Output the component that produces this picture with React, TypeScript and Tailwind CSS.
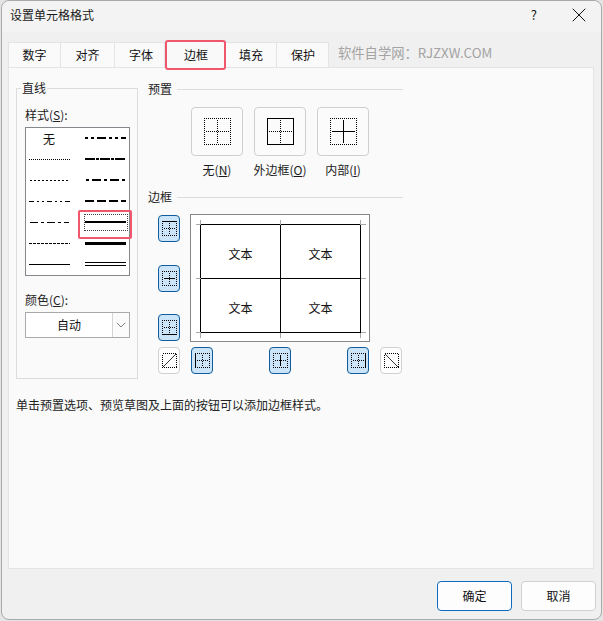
import { X, ChevronDown } from "lucide-react"

const font = "font-['Noto_Sans_CJK_SC','Liberation_Sans',sans-serif]"

const tabs = [
  { label: "数字", w: "w-[53px]" },
  { label: "对齐", w: "w-[54px]" },
  { label: "字体", w: "w-[50px] pl-[3px]" },
  { label: "边框", w: "w-[61px] pl-px", active: true },
  { label: "填充", w: "w-[51px]" },
  { label: "保护", w: "w-[52px] pl-px" },
]

// one dash pattern per cell, left column then right column
const leftLines = [
  { dash: "1 1", h: 1, w: 41 },
  { dash: "2 2", h: 1, w: 38 },
  { dash: "5 3 2 3 2 3", h: 1, w: 41 },
  { dash: "8 3 3 3", h: 1, w: 39 },
  { dash: "3 1", h: 1, w: 41 },
  { dash: "", h: 1, w: 41 },
]
const rightLines = [
  { dash: "3 3 3 3 9 3", h: 2, w: 41 },
  { dash: "10 1 3 1", h: 2, w: 41 },
  { dash: "3 3 9 3", h: 2, w: 39 },
  { dash: "9 3", h: 2, w: 41 },
  { dash: "", h: 2, w: 41 },
  { dash: "", h: 3, w: 41 },
]

function StyleLine({ dash, h, w }: { dash: string; h: number; w: number }) {
  const y = h % 2 === 1 ? 2.5 : 2
  return (
    <svg width={w} height="5" className="block" shapeRendering="crispEdges">
      <line x1="0" x2={w} y1={y} y2={y} stroke="#000" strokeWidth={h} strokeDasharray={dash || undefined} />
    </svg>
  )
}

function DoubleLine() {
  return (
    <svg width="41" height="5" className="block" shapeRendering="crispEdges">
      <path d="M0 .5H41M0 3.5H41" stroke="#000" strokeWidth="1" fill="none" />
    </svg>
  )
}

// border icon: dotted frame and cross, with some of the lines solid
function BorderIcon({ top, bottom, left, right, midH, midV, size = 27 }: { top?: boolean; bottom?: boolean; left?: boolean; right?: boolean; midH?: boolean; midV?: boolean; size?: number }) {
  const s = size - 0.5
  const m = size / 2
  const side = (on: boolean | undefined, d: string) => (
    <path d={d} fill="none" stroke="#000" strokeWidth="1" strokeDasharray={on ? undefined : "1 1"} />
  )
  return (
    <svg width={size} height={size} className="block" shapeRendering="crispEdges">
      {side(midH, `M2 ${m}H${size - 2}`)}
      {side(midV, `M${m} 2V${size - 2}`)}
      {side(top, `M0 .5H${size}`)}
      {side(bottom, `M0 ${s}H${size}`)}
      {side(left, `M.5 0V${size}`)}
      {side(right, `M${s} 0V${size}`)}
    </svg>
  )
}

function PresetButton({ label, hot, children }: { label: string; hot: string; children: React.ReactNode }) {
  return (
    <div className="flex w-[62px] flex-col items-center">
      <div className="flex h-[49px] w-[52px] items-center justify-center rounded-[4px] border border-[#cfcfcf] bg-[#fbfbfb]">
        {children}
      </div>
      <div className="mt-[4px] whitespace-nowrap text-[12px] leading-[20px] text-[#1a1a1a]">
        {label}(<span className="underline">{hot}</span>)
      </div>
    </div>
  )
}

function ToggleButton({ on, children }: { on?: boolean; children: React.ReactNode }) {
  return (
    <div
      className={
        on
          ? "flex h-[27px] w-[22px] items-center justify-center rounded-[4px] border border-[#0f5c9e] bg-[#cce4f7]"
          : "flex h-[27px] w-[22px] items-center justify-center rounded-[4px] border border-[#d0d0d0] bg-[#fdfdfd]"
      }
    >
      {children}
    </div>
  )
}

function Mini(props: { top?: boolean; bottom?: boolean; left?: boolean; right?: boolean; midH?: boolean; midV?: boolean }) {
  return <BorderIcon size={15} {...props} />
}

function Diagonal({ flip }: { flip?: boolean }) {
  return (
    <svg width="15" height="15" className="block">
      <rect x=".5" y=".5" width="14" height="14" fill="none" stroke="#000" strokeDasharray="1 1" shapeRendering="crispEdges" />
      <path d={flip ? "M1 1L14 14" : "M14 1L1 14"} stroke="#333" strokeWidth="1" />
    </svg>
  )
}

export default function App() {
  return (
    <div className={`h-[621px] w-[603px] overflow-hidden bg-[#e4e4e4] ${font}`}>
      <div className="ml-px flex h-[620px] w-[601px] flex-col rounded-[8px] border border-[#a9a9a9] bg-[#f0f0f0]">
        {/* title bar */}
        <div className="flex h-[31px] items-center rounded-t-[8px] bg-[#f3f3f3] pb-[3px] pl-[8px] pr-[10px]">
          <span className="flex-1 text-[12px] text-[#1a1a1a]">设置单元格格式</span>
          <span className="mr-[30px] text-[13px] text-[#1a1a1a]">?</span>
          <X size={24} strokeWidth={1} className="text-[#111]" />
        </div>

        {/* tabs */}
        <div className="relative z-10 mt-[10px] flex h-[25px] items-end pl-[6px] text-[12px] text-[#111]">
          {tabs.map((t) =>
            t.active ? (
              <div key={t.label} className={`${t.w} relative z-10 mb-[-3px] flex h-[30px] items-center justify-center rounded-[3px] border-2 border-[#f0566c] bg-[#f9f9f9]`}>
                {t.label}
              </div>
            ) : (
              <div key={t.label} className={`${t.w} flex h-[25px] items-center justify-center border-t border-r border-[#e4e4e4] bg-[#fafafa] first:border-l`}>
                {t.label}
              </div>
            )
          )}
          <span className="mb-[4px] ml-[9px] self-center whitespace-nowrap text-[13.3px] text-[#a3a3a3]">软件自学网：RJZXW.COM</span>
        </div>

        {/* panel */}
        <div className="ml-[6px] mr-[7px] flex h-[502px] flex-col border border-[#e4e4e4] bg-[#fafafa] pl-[7px]">
          <div className="mt-[12px] flex">
            {/* line group */}
            <div className="relative mt-[8px] h-[291px] w-[122px] border border-[#dcdcdc] pl-[8px]">
              <span className="absolute -top-[10px] left-[4px] bg-[#fafafa] px-px text-[12px] leading-[18px] text-[#222]">直线</span>
              <div className="mt-[16px] text-[12px] leading-[20px] text-[#222]">
                样式(<span className="underline">S</span>):
              </div>
              <div className="mt-[2px] flex h-[149px] w-[105px] border border-[#84878b] bg-white">
                <div className="flex w-[46px] flex-col items-center">
                  <div className="flex h-[21px] items-center text-[12px] text-[#111]">无</div>
                  {leftLines.map((l, i) => (
                    <div key={i} className="flex h-[21px] items-center">
                      <StyleLine {...l} />
                    </div>
                  ))}
                </div>
                <div className="flex flex-1 flex-col items-center pl-[10px]">
                  {rightLines.map((l, i) => (
                    <div key={i} className="flex h-[21px] items-center">
                      {i === 4 ? (
                        <div className="flex h-[17px] w-[44px] items-center justify-center border border-dotted border-[#444]">
                          <StyleLine {...l} />
                        </div>
                      ) : (
                        <StyleLine {...l} />
                      )}
                    </div>
                  ))}
                  <div className="flex h-[21px] items-center">
                    <DoubleLine />
                  </div>
                </div>
              </div>
              {/* red marker round the chosen style */}
              <div className="absolute left-[61px] top-[121px] h-[29px] w-[54px] rounded-[2px] border-2 border-[#f0566c]" />
              <div className="mt-[14px] text-[12px] leading-[20px] text-[#222]">
                颜色(<span className="underline">C</span>):
              </div>
              <div className="mt-[2px] flex h-[26px] w-[105px] items-center border border-[#a9aaad] bg-white">
                <span className="flex-1 text-center text-[12px] text-[#111]">自动</span>
                <span className="flex h-[24px] w-[17px] items-center justify-center border-l border-[#d4d4d4] bg-[#fbfbfb]">
                  <ChevronDown size={16} strokeWidth={1} className="text-[#444]" />
                </span>
              </div>
            </div>

            {/* right side */}
            <div className="ml-[10px] w-[255px]">
              <div className="flex items-center gap-[5px] text-[12px] leading-[18px] text-[#222]">
                预置
                <div className="h-px flex-1 bg-[#dcdcdc]" />
              </div>
              <div className="ml-[38px] mt-[9px] flex gap-px">
                <PresetButton label="无" hot="N">
                  <BorderIcon size={27} />
                </PresetButton>
                <PresetButton label="外边框" hot="O">
                  <BorderIcon size={27} top bottom left right />
                </PresetButton>
                <PresetButton label="内部" hot="I">
                  <BorderIcon size={27} midH midV />
                </PresetButton>
              </div>
              <div className="mt-[8px] flex items-center gap-[5px] text-[12px] leading-[18px] text-[#222]">
                边框
                <div className="h-px flex-1 bg-[#dcdcdc]" />
              </div>

              <div className="ml-[10px] mt-[8px] flex">
                <div className="mr-[10px] flex h-[128px] flex-col justify-between py-[1px]">
                  <ToggleButton on><Mini top /></ToggleButton>
                  <ToggleButton on><Mini midH /></ToggleButton>
                  <ToggleButton on><Mini bottom /></ToggleButton>
                </div>
                <div className="relative h-[128px] w-[180px] border border-[#84878b] bg-white pb-[8px] pl-[9px] pr-[8px] pt-[9px]">
                  <div className="grid h-full grid-cols-[80px_79px] grid-rows-[54px_53px] border border-black text-[12px] text-[#111]">
                    <div className="flex items-center justify-center border-b border-r border-black pt-[4px]">文本</div>
                    <div className="flex items-center justify-center border-b border-black pt-[4px]">文本</div>
                    <div className="flex items-center justify-center border-r border-black pt-[4px]">文本</div>
                    <div className="flex items-center justify-center pt-[4px]">文本</div>
                  </div>
                  {/* corner ticks */}
                  <svg width="178" height="126" className="absolute left-0 top-0" shapeRendering="crispEdges">
                    <path d="M4 9H9M9 4V9M4 117H9M9 117V122M169 4V9M169 9H174M169 117H174M169 117V122M89 4V9M89 117V122M4 63H9M169 63H174" stroke="#a8a8a8" strokeWidth="1" fill="none" transform="translate(.5 .5)" />
                  </svg>
                </div>
              </div>
              <div className="ml-[10px] mt-[5px] flex w-[244px] items-center gap-[11px]">
                <ToggleButton><Diagonal /></ToggleButton>
                <div className="flex flex-1 justify-between">
                  <ToggleButton on><Mini left /></ToggleButton>
                  <ToggleButton on><Mini midV /></ToggleButton>
                  <ToggleButton on><Mini right /></ToggleButton>
                </div>
                <ToggleButton><Diagonal flip /></ToggleButton>
              </div>
            </div>
          </div>
          <div className="mt-[16px] text-[12px] leading-[20px] text-[#222]">
            单击预置选项、预览草图及上面的按钮可以添加边框样式。
          </div>
        </div>

        {/* footer */}
        <div className="mt-[12px] flex justify-end gap-[9px] pr-[5px] text-[12px] text-[#111]">
          <div className="flex h-[30px] w-[75px] items-center justify-center rounded-[4px] border border-[#0f6cbd] bg-[#fdfdfd]">确定</div>
          <div className="flex h-[30px] w-[75px] items-center justify-center rounded-[4px] border border-[#d0d0d0] bg-[#fdfdfd]">取消</div>
        </div>
      </div>
    </div>
  )
}
